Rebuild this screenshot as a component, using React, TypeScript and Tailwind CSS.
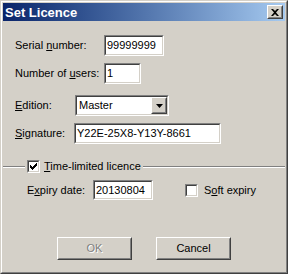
import React from 'react';

const font = { fontFamily: '"Liberation Sans", Arial, sans-serif' };

function Sunken({ className = '', children }: { className?: string; children?: React.ReactNode }) {
    return (
        <div className={`border border-t-[#808080] border-l-[#808080] border-b-white border-r-white ${className}`}>
            <div className="h-full w-full border border-t-[#404040] border-l-[#404040] border-b-[#d4d0c8] border-r-[#d4d0c8] bg-white">
                {children}
            </div>
        </div>
    );
}

function Raised({ className = '', children }: { className?: string; children?: React.ReactNode }) {
    return (
        <div className={`border border-t-white border-l-white border-b-[#404040] border-r-[#404040] bg-[#d4d0c8] ${className}`}>
            <div className="h-full w-full border border-t-[#d4d0c8] border-l-[#d4d0c8] border-b-[#808080] border-r-[#808080] flex items-center justify-center">
                {children}
            </div>
        </div>
    );
}

function TextBox({ value, className = '' }: { value: string; className?: string }) {
    return (
        <Sunken className={className}>
            <div className="pl-[1px] leading-[17px] text-[11px] text-black whitespace-nowrap overflow-hidden">{value}</div>
        </Sunken>
    );
}

function CheckBox({ checked }: { checked: boolean }) {
    return (
        <Sunken className="w-[13px] h-[13px] shrink-0">
            {checked && (
                <svg width="9" height="9" viewBox="0 0 9 9" className="block" shapeRendering="crispEdges">
                    <polygon points="1,3 3,5 8,0 8,3 3,8 1,6" fill="black" />
                </svg>
            )}
        </Sunken>
    );
}

export default function App() {
    return (
        <div style={font} className="w-[288px] h-[274px] bg-[#d4d0c8] border border-t-[#d4d0c8] border-l-[#d4d0c8] border-b-[#404040] border-r-[#404040] text-[11px] text-black">
            <div className="h-full w-full border border-t-white border-l-white border-b-[#808080] border-r-[#808080] p-[1px] flex flex-col">
                {/* title bar */}
                <div className="h-[18px] bg-gradient-to-r from-[#0a246a] to-[#a6caf0] flex items-center justify-between pl-[2px] pr-[2px]">
                    <span className="text-white font-bold text-[13px] leading-none">Set Licence</span>
                    <Raised className="w-[16px] h-[14px]">
                        <svg width="8" height="7" viewBox="0 0 8 7">
                            <path d="M0 0h2l2 2 2-2h2l-3 3.5 3 3.5h-2l-2-2-2 2h-2l3-3.5z" fill="black" />
                        </svg>
                    </Raised>
                </div>

                {/* body */}
                <div className="flex flex-col pl-[12px] pt-[14px]">
                    <div className="flex items-center h-[21px]">
                        <span className="w-[89px]">Serial <span className="underline">n</span>umber:</span>
                        <TextBox value="99999999" className="w-[60px] h-[21px]" />
                    </div>
                    <div className="flex items-center h-[21px] mt-[7px]">
                        <span className="w-[89px]">Number of <span className="underline">u</span>sers:</span>
                        <TextBox value="1" className="w-[37px] h-[21px]" />
                    </div>
                    <div className="flex items-center h-[21px] mt-[11px]">
                        <span className="w-[60px]"><span className="underline">E</span>dition:</span>
                        <Sunken className="w-[94px] h-[21px]">
                            <div className="flex h-full items-center">
                                <span className="flex-1 pl-[2px] leading-[17px]">Master</span>
                                <Raised className="w-[16px] h-[17px]">
                                    <svg width="7" height="4" viewBox="0 0 7 4">
                                        <path d="M0 0h7l-3.5 4z" fill="black" />
                                    </svg>
                                </Raised>
                            </div>
                        </Sunken>
                    </div>
                    <div className="flex items-center h-[21px] mt-[7px]">
                        <span className="w-[59px]"><span className="underline">S</span>ignature:</span>
                        <TextBox value="Y22E-25X8-Y13Y-8661" className="w-[147px] h-[21px]" />
                    </div>
                </div>

                {/* group */}
                <div className="flex items-center mt-[16px] h-[13px]">
                    <div className="w-[22px] h-[2px] border-t border-t-[#808080] border-b border-b-white" />
                    <div className="flex items-center gap-[4px] px-[2px]">
                        <CheckBox checked />
                        <span><span className="underline">T</span>ime-limited licence</span>
                    </div>
                    <div className="flex-1 h-[2px] border-t border-t-[#808080] border-b border-b-white" />
                </div>
                <div className="flex items-center h-[20px] mt-[7px] pl-[24px]">
                    <span className="w-[66px]">E<span className="underline">x</span>piry date:</span>
                    <TextBox value="20130804" className="w-[60px] h-[20px]" />
                    <div className="flex items-center gap-[6px] ml-[32px]">
                        <CheckBox checked={false} />
                        <span>S<span className="underline">o</span>ft expiry</span>
                    </div>
                </div>

                {/* buttons */}
                <div className="flex mt-[37px] pl-[54px] gap-[24px]">
                    <Raised className="w-[75px] h-[23px]">
                        <span className="text-[#808080] [text-shadow:1px_1px_0_#ffffff]">OK</span>
                    </Raised>
                    <Raised className="w-[75px] h-[23px]">
                        <span>Cancel</span>
                    </Raised>
                </div>
            </div>
        </div>
    );
}
